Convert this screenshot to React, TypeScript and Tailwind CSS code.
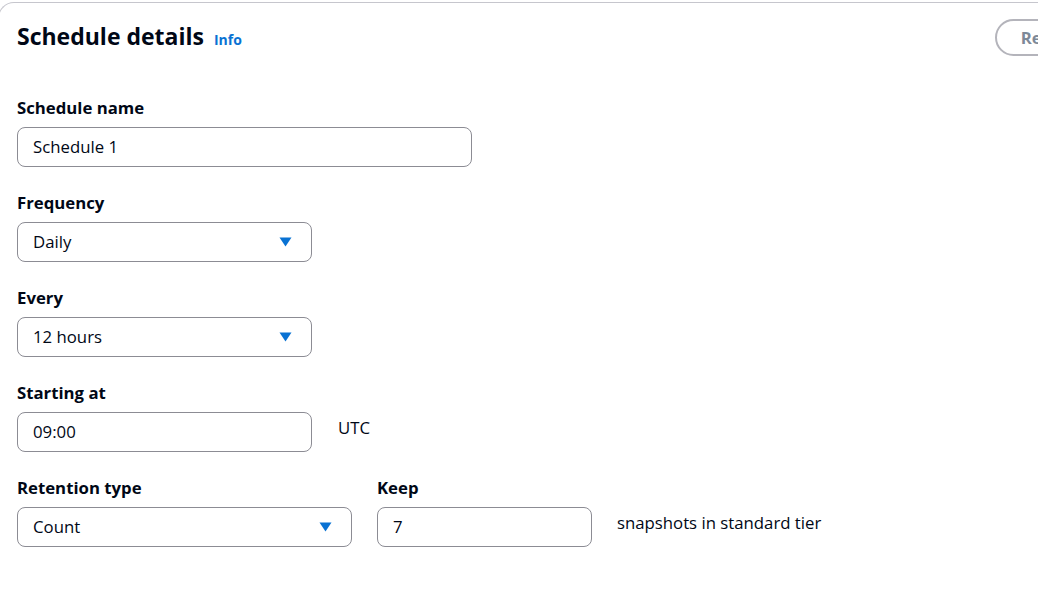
import { ReactNode } from "react";

function Caret() {
  return (
    <svg width="13" height="10" viewBox="0 0 13 10" className="shrink-0">
      <path d="M0.5 0.5h12L6.5 9.5z" fill="#0972d3" />
    </svg>
  );
}

function Field({ label, children }: { label: string; children: ReactNode }) {
  return (
    <div className="flex flex-col gap-2">
      <label className="text-[16.75px] font-bold leading-[22px] text-[#000716]">{label}</label>
      {children}
    </div>
  );
}

function TextBox({ value, className }: { value: string; className: string }) {
  return (
    <div
      className={`flex h-10 items-center rounded-lg border border-[#8c8c94] px-[15px] text-[16.75px] text-[#000716] ${className}`}
    >
      {value}
    </div>
  );
}

function Select({ value, className }: { value: string; className: string }) {
  return (
    <div
      className={`flex h-10 items-center justify-between rounded-lg border border-[#8c8c94] pl-[15px] pr-[19px] text-[16.75px] text-[#000716] ${className}`}
    >
      <span>{value}</span>
      <Caret />
    </div>
  );
}

export default function App() {
  return (
    <div
      className="h-[590px] w-[1038px] overflow-hidden bg-white pt-[2px]"
      style={{ fontFamily: '"Open Sans", "Noto Sans", sans-serif' }}
    >
      <div className="-ml-[2px] -mr-10 h-[620px] rounded-tl-2xl border-l border-t border-[#c6c6cd] pl-[18px]">
        <div className="flex items-center justify-between pt-[16px]">
          <div className="-mt-[4px] flex items-baseline gap-[10px]">
            <h2 className="text-[23px] font-bold leading-[36px] text-[#000716]">Schedule details</h2>
            <a className="text-[14px] font-bold text-[#0972d3]">Info</a>
          </div>
          <button className="mr-[-33px] h-[37px] rounded-full border-2 border-[#b4b4bb] px-6 text-[16.75px] font-bold text-[#7d8998]">
            Refresh
          </button>
        </div>

        <div className="mt-[41px] flex flex-col gap-[25px]">
          <Field label="Schedule name">
            <TextBox value="Schedule 1" className="w-[455px]" />
          </Field>
          <Field label="Frequency">
            <Select value="Daily" className="w-[295px]" />
          </Field>
          <Field label="Every">
            <Select value="12 hours" className="w-[295px]" />
          </Field>
          <div className="flex items-end gap-[26px]">
            <Field label="Starting at">
              <TextBox value="09:00" className="w-[295px]" />
            </Field>
            <span className="mb-[12px] text-[16.75px] text-[#000716]">UTC</span>
          </div>
          <div className="flex items-end">
            <Field label="Retention type">
              <Select value="Count" className="w-[335px]" />
            </Field>
            <div className="ml-[25px]">
              <Field label="Keep">
                <TextBox value="7" className="w-[215px]" />
              </Field>
            </div>
            <span className="mb-[12px] ml-[25px] text-[16.75px] text-[#000716]">snapshots in standard tier</span>
          </div>
        </div>
      </div>
    </div>
  );
}
